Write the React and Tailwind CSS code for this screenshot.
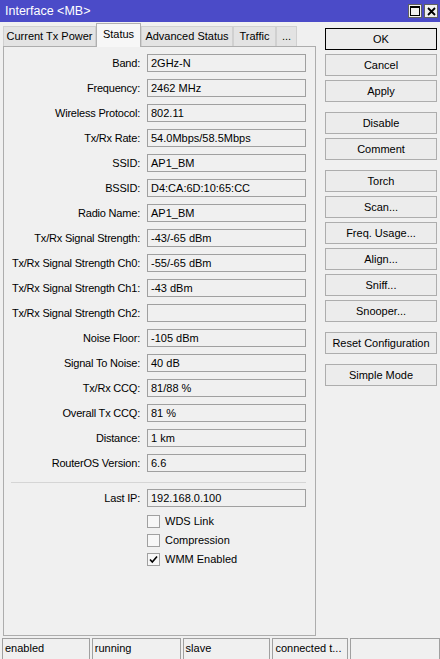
import { useState } from "react";

const fields = [
  ["Band", "2GHz-N"],
  ["Frequency", "2462 MHz"],
  ["Wireless Protocol", "802.11"],
  ["Tx/Rx Rate", "54.0Mbps/58.5Mbps"],
  ["SSID", "AP1_BM"],
  ["BSSID", "D4:CA:6D:10:65:CC"],
  ["Radio Name", "AP1_BM"],
  ["Tx/Rx Signal Strength", "-43/-65 dBm"],
  ["Tx/Rx Signal Strength Ch0", "-55/-65 dBm"],
  ["Tx/Rx Signal Strength Ch1", "-43 dBm"],
  ["Tx/Rx Signal Strength Ch2", ""],
  ["Noise Floor", "-105 dBm"],
  ["Signal To Noise", "40 dB"],
  ["Tx/Rx CCQ", "81/88 %"],
  ["Overall Tx CCQ", "81 %"],
  ["Distance", "1 km"],
  ["RouterOS Version", "6.6"],
];

const tabs = [
  ["Current Tx Power", "w-[93px]"],
  ["Status", "w-[45px]"],
  ["Advanced Status", "w-[92px]"],
  ["Traffic", "w-[43px]"],
  ["...", "w-[21px]"],
];

const buttonGroups = [
  ["OK", "Cancel", "Apply"],
  ["Disable", "Comment"],
  ["Torch", "Scan...", "Freq. Usage...", "Align...", "Sniff...", "Snooper..."],
  ["Reset Configuration"],
  ["Simple Mode"],
];

function Field({ label, value }) {
  return (
    <div className="flex items-center h-[18px] mb-[7px]">
      <div className="w-[136px] text-right tracking-[-0.2px] whitespace-nowrap">{label}:</div>
      <div className="ml-[7px] w-[159px] h-[18px] border border-[#a0a0a0] pl-[3px] leading-[16px] whitespace-nowrap">
        {value}
      </div>
    </div>
  );
}

function Check({ label, checked }) {
  return (
    <div className="flex items-center h-[13px] mb-[6px] ml-[143px]">
      <div className="w-[13px] h-[13px] border border-[#a0a0a0] bg-[#f7f7f7] flex items-center justify-center">
        {checked && (
          <svg width="9" height="9" viewBox="0 0 9 9">
            <path d="M1 4.5 L3.3 7 L8 1.5" fill="none" stroke="#000" strokeWidth="1.6" />
          </svg>
        )}
      </div>
      <span className="ml-[5px]">{label}</span>
    </div>
  );
}

export default function App() {
  const [active] = useState("Status");

  return (
    <div
      className="w-[440px] h-[659px] overflow-hidden bg-[#f0f0f0] text-[11px] text-black flex flex-col"
      style={{ fontFamily: '"Liberation Sans", Arial, sans-serif' }}
    >
      {/* title bar */}
      <div className="h-[22px] bg-[#4b4bc8] flex items-center pl-[5px] pr-[2px] shrink-0">
        <span className="text-white text-[12.5px] flex-1">Interface &lt;MB&gt;</span>
        <div className="w-[14px] h-[14px] bg-[#f0f0f0] border border-[#606060] flex items-center justify-center mr-[2px]">
          <div className="w-[10px] h-[10px] border border-black border-t-2" />
        </div>
        <div className="w-[14px] h-[14px] bg-[#f0f0f0] border border-[#606060] flex items-center justify-center">
          <svg width="9" height="9" viewBox="0 0 9 9">
            <path d="M1 1 L8 8 M8 1 L1 8" stroke="#000" strokeWidth="1.8" />
          </svg>
        </div>
      </div>

      <div className="flex flex-1">
        {/* tabs + status panel */}
        <div className="w-[316px] pl-[3px] flex flex-col">
          <div className="flex items-end h-[24px]">
            {tabs.map(([name, w]) =>
              name === active ? (
                <div
                  key={name}
                  className={`${w} h-[24px] bg-[#f7f7f7] border border-b-0 border-[#b0b0b0] flex items-center justify-center pb-[3px] relative top-[1px]`}
                >
                  {name}
                </div>
              ) : (
                <div
                  key={name}
                  className={`${w} h-[20px] bg-[#e3e3e3] border border-b-0 border-[#d0d0d0] flex items-center justify-center`}
                >
                  {name}
                </div>
              )
            )}
          </div>
          <div className="h-[590px] border border-[#adadad] pt-[7px]">
            {fields.map(([label, value]) => (
              <Field key={label} label={label} value={value} />
            ))}
            <div className="pt-[3px] pb-[6px]">
              <div className="ml-[7px] w-[295px] border-t border-[#d5d5d5]" />
            </div>
            <Field label="Last IP" value="192.168.0.100" />
            <div className="pt-[1px]">
              <Check label="WDS Link" />
              <Check label="Compression" />
              <Check label="WMM Enabled" checked />
            </div>
          </div>
        </div>

        {/* dialog buttons */}
        <div className="ml-[9px] pt-[6px] flex flex-col gap-[10px]">
          {buttonGroups.map((group, i) => (
            <div key={i} className="flex flex-col gap-[4px]">
              {group.map((b) => (
                <div
                  key={b}
                  className={`w-[112px] h-[22px] flex items-center justify-center bg-[#ececec] border ${
                    b === "OK" ? "border-black" : "border-[#adadad]"
                  }`}
                >
                  {b}
                </div>
              ))}
            </div>
          ))}
        </div>
      </div>

      {/* status bar */}
      <div className="h-[21px] flex items-start pl-[2px] gap-[2px] shrink-0">
        {[
          ["enabled", "w-[88px]"],
          ["running", "w-[89px]"],
          ["slave", "w-[88px]"],
          ["connected t...", "w-[76px]"],
          ["", "w-[90px]"],
        ].map(([t, w], i) => (
          <div key={i} className={`${w} h-[22px] border border-[#a0a0a0] pl-[2px] leading-[18px] whitespace-nowrap`}>
            {t}
          </div>
        ))}
      </div>
    </div>
  );
}
